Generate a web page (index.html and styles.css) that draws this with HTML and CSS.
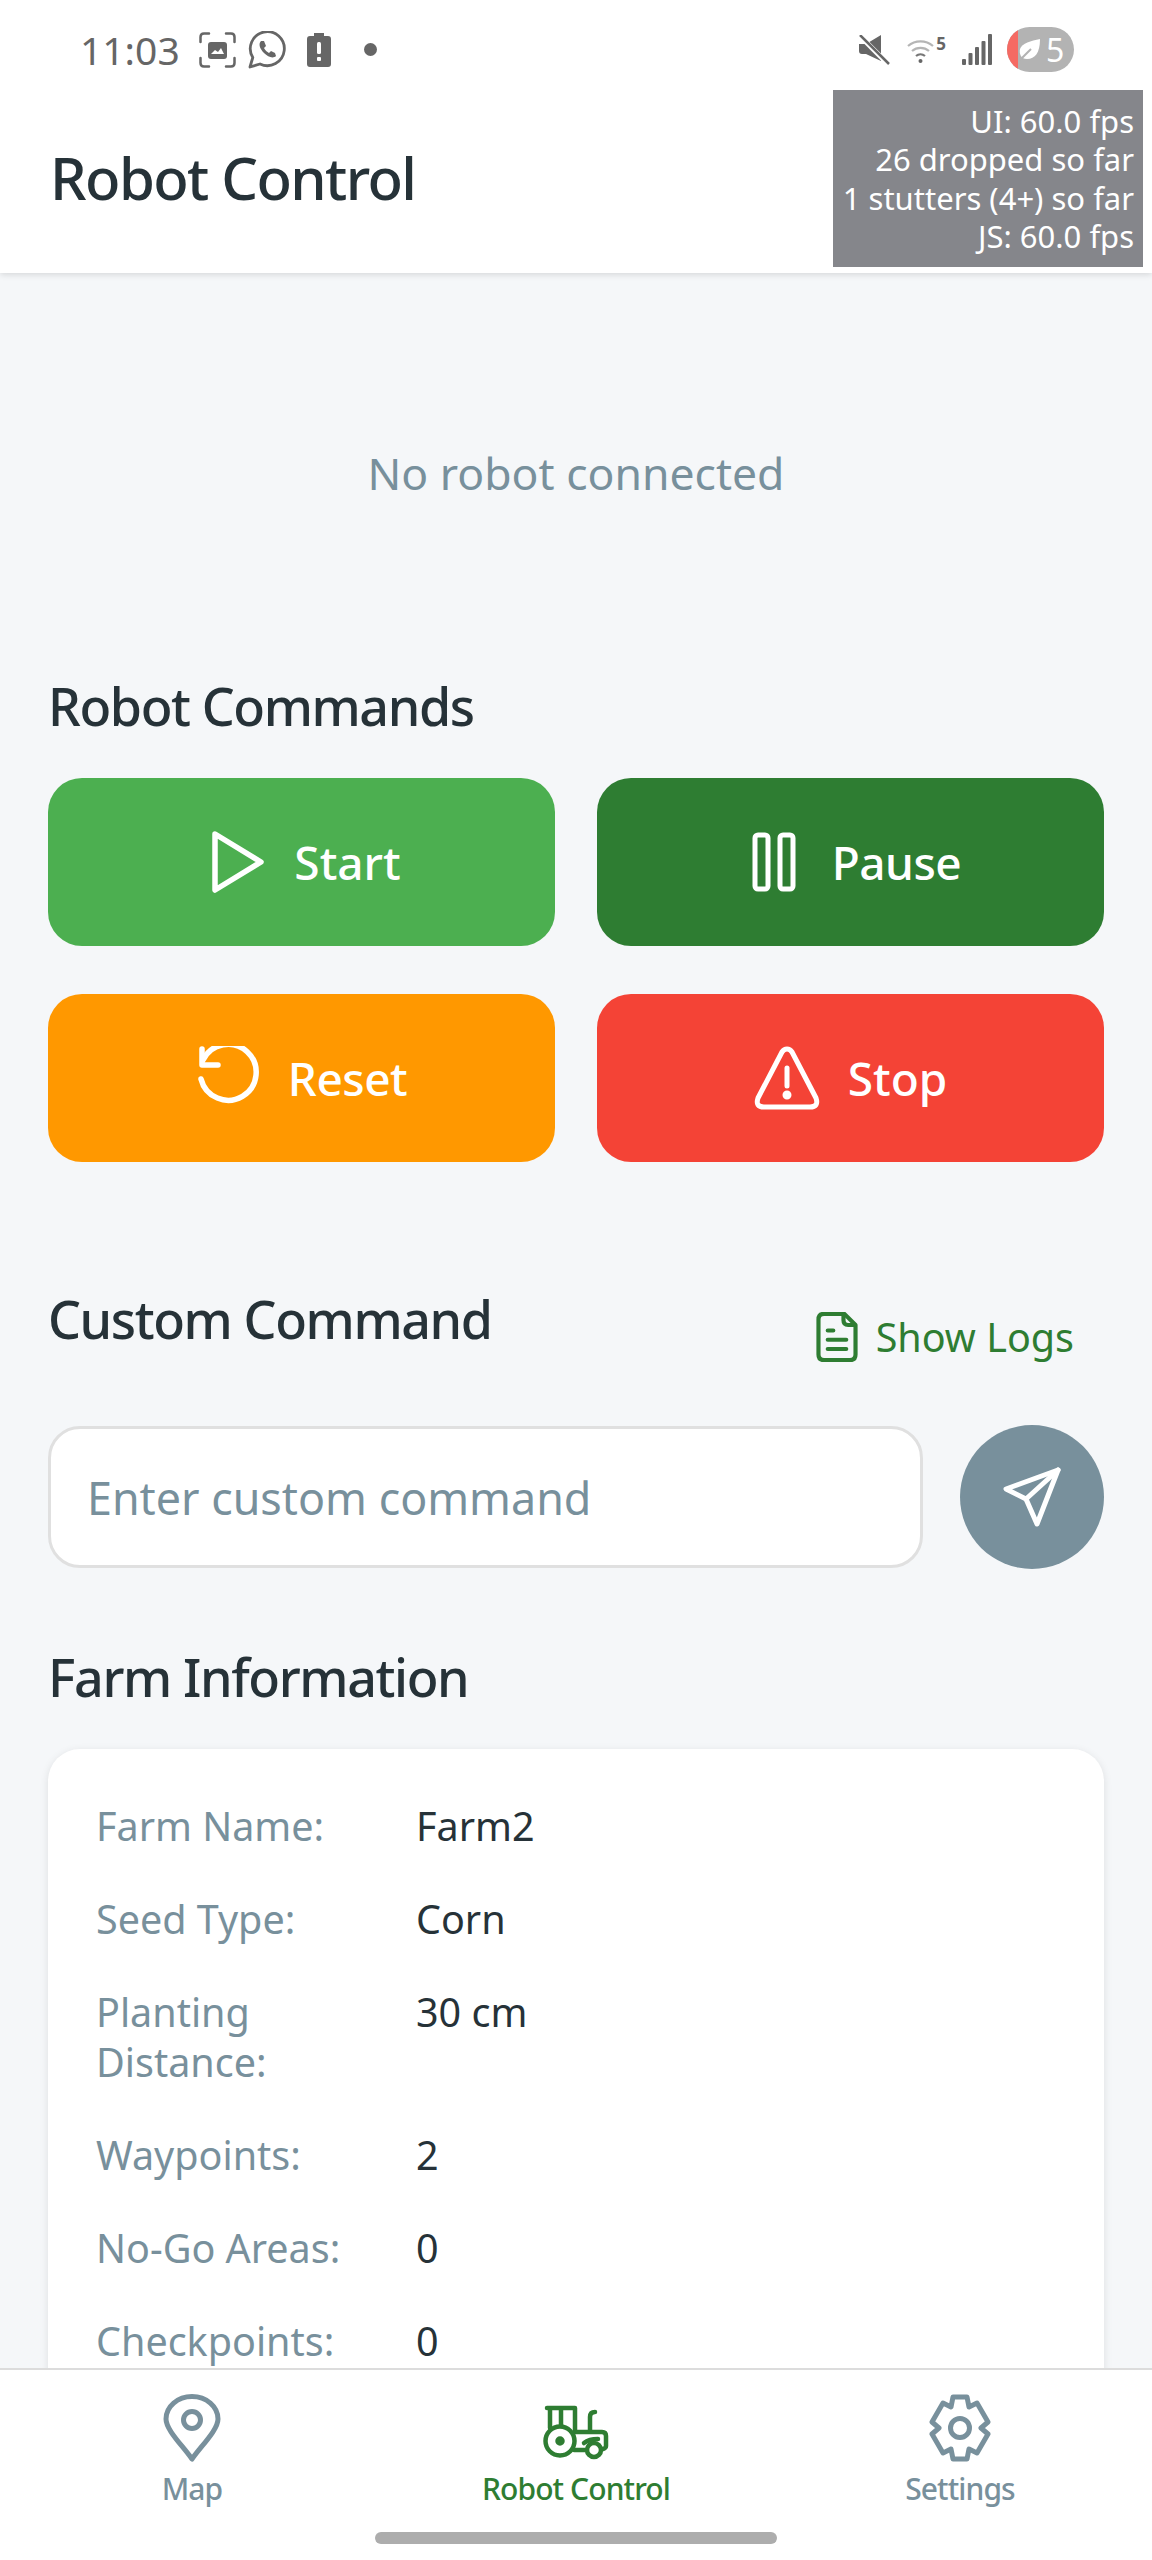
FILE: index.html
```html
<!DOCTYPE html>
<html lang="en">
<head>
    <meta charset="UTF-8">
    <meta name="viewport" content="width=device-width, initial-scale=1.0">
    <title>Robot Control</title>
    <link rel="stylesheet" href="styles.css">
</head>
<body>
<div class="app">

    <!-- status bar -->
    <div class="status-bar">
        <div class="status-left">
            <span class="clock">11:03</span>
            <svg class="st-shot" width="37" height="36" viewBox="0 0 37 36" fill="none" stroke="#666" stroke-width="2.500" stroke-linecap="round">
                <path d="M1.500 10V5q0-3.500 3.500-3.500h5M27 1.500h5q3.500 0 3.500 3.500v5M35.500 26v5q0 3.500-3.500 3.500h-5M10 34.500H5q-3.500 0-3.500-3.500v-5"/>
                <rect x="9" y="10" width="19" height="17" rx="3" fill="#666" stroke="none"/>
                <path d="M12 22l4-4 3 2 3-4 3 6z" fill="#fff" stroke="none"/>
            </svg>
            <svg class="st-chat" width="39" height="38" viewBox="0 0 39 38" fill="none" stroke="#666" stroke-width="2.800">
                <path d="M2 36l2.800-9.500A17 17 0 1 1 12 33z" stroke-linejoin="round"/>
                <path d="M13 10c-3 3-1 8 3 12s9 6 12 3l-1-3-4-2-2 2c-2-1-4-3-5-5l2-2-2-5z" fill="#666" stroke="none"/>
            </svg>
            <svg class="st-batt" width="24" height="34" viewBox="0 0 24 34">
                <path d="M7 0h10v3h4q3 0 3 3v25q0 3-3 3H3q-3 0-3-3V6q0-3 3-3h4z" fill="#666"/>
                <rect x="10" y="9" width="4" height="12" rx="1.500" fill="#fff"/>
                <rect x="10" y="24" width="4" height="4" rx="1" fill="#fff"/>
            </svg>
            <span class="st-dot"></span>
        </div>
        <div class="status-right">
            <svg class="st-mute" width="31" height="30" viewBox="0 0 31 30">
                <path d="M0 9h7L22 0v26L7 19H3q-3 0-3-3z" fill="#666"/>
                <path d="M2 2l28 28" stroke="#fff" stroke-width="5"/>
                <path d="M1 0l29 29" stroke="#666" stroke-width="2.500"/>
            </svg>
            <div class="st-wifi">
                <svg width="27" height="26" viewBox="0 0 27 26" fill="none" stroke="#b5b5b5" stroke-width="2.200">
                    <path d="M1 9a19 19 0 0 1 25 0M5 14a13 13 0 0 1 17 0"/>
                    <path d="M9 19a7 7 0 0 1 9 0" stroke="#777"/>
                    <circle cx="13.500" cy="24" r="2" fill="#666" stroke="none"/>
                </svg>
                <span class="wifi-num">5</span>
            </div>
            <svg class="st-signal" width="30" height="31" viewBox="0 0 30 31" fill="#666">
                <rect x="0" y="25" width="4" height="6" rx="1"/>
                <rect x="6.500" y="19" width="4" height="12" rx="1"/>
                <rect x="13" y="13" width="4" height="18" rx="1"/>
                <rect x="19.500" y="7" width="4" height="24" rx="1"/>
                <rect x="26" y="0" width="4" height="31" rx="1"/>
            </svg>
            <div class="battery">
                <span class="battery-low"></span>
                <svg width="22" height="22" viewBox="0 0 22 22">
                    <path d="M21 0C21 14 16 20 8 20 2 20 0 15 1 10 3 4 12 2 21 0z" fill="#fff"/>
                    <path d="M0 22L12 10" stroke="#b3b3b3" stroke-width="2"/>
                </svg>
                <span class="battery-num">5</span>
            </div>
        </div>
    </div>

    <header class="top-bar">
        <h1>Robot Control</h1>
    </header>

    <!-- fps overlay from the dev build -->
    <div class="perf">
        <div>UI: 60.0 fps</div>
        <div>26 dropped so far</div>
        <div>1 stutters (4+) so far</div>
        <div>JS: 60.0 fps</div>
    </div>

    <main class="content">
        <p class="no-robot">No robot connected</p>

        <h2 class="commands-title">Robot Commands</h2>
        <div class="commands">
            <button class="cmd cmd-start">
                <svg width="64" height="64" viewBox="-9 0 64 64" fill="none" stroke="#fff" stroke-width="5.500" stroke-linejoin="round">
                    <path d="M4 4l46 28L4 60z"/>
                </svg>
                Start
            </button>
            <button class="cmd cmd-pause">
                <svg width="64" height="64" viewBox="-12 -2 64 64" fill="none" stroke="#fff" stroke-width="5">
                    <rect x="3" y="3" width="13" height="54" rx="3"/>
                    <rect x="28" y="3" width="13" height="54" rx="3"/>
                </svg>
                Pause
            </button>
            <button class="cmd cmd-reset">
                <svg width="64" height="64" viewBox="-2 0 64 64" fill="none" stroke="#fff" stroke-width="5.500" stroke-linecap="round" stroke-linejoin="round">
                    <path d="M5 14A28 28 0 1 1 3 33"/>
                    <path d="M4 3v16h16"/>
                </svg>
                Reset
            </button>
            <button class="cmd cmd-stop">
                <svg width="66" height="64" viewBox="0 0 66 64" fill="none" stroke="#fff" stroke-width="5" stroke-linecap="round" stroke-linejoin="round">
                    <path d="M33 3q3 0 5 3l24 46q3 9-6 9H10q-9 0-6-9L28 6q2-3 5-3z"/>
                    <path d="M33 22v18"/>
                    <circle cx="33" cy="49" r="2" fill="#fff"/>
                </svg>
                Stop
            </button>
        </div>

        <div class="custom-head">
            <h2>Custom Command</h2>
            <div class="show-logs">
                <svg width="42" height="50" viewBox="0 0 44 54" fill="none" stroke="#2e7d32" stroke-width="4.500" stroke-linecap="round" stroke-linejoin="round">
                    <path d="M8 2h22l12 12v32q0 6-6 6H8q-6 0-6-6V8q0-6 6-6z"/>
                    <path d="M29 3v6q0 5 5 5h7"/>
                    <path d="M12 20h6M12 30h20M12 40h20"/>
                </svg>
                <span>Show Logs</span>
            </div>
        </div>
        <div class="custom-row">
            <div class="custom-input">Enter custom command</div>
            <button class="send">
                <svg width="58" height="60" viewBox="0 0 58 60" fill="none" stroke="#fff" stroke-width="5" stroke-linecap="round" stroke-linejoin="round">
                    <path d="M55 3L3 22l20 10 11 25z"/>
                    <path d="M23 32L55 3"/>
                </svg>
            </button>
        </div>

        <h2 class="farm-title">Farm Information</h2>
        <div class="farm-card">
            <div class="farm-row"><span class="farm-label">Farm Name:</span><span class="farm-value">Farm2</span></div>
            <div class="farm-row"><span class="farm-label">Seed Type:</span><span class="farm-value">Corn</span></div>
            <div class="farm-row"><span class="farm-label">Planting Distance:</span><span class="farm-value">30 cm</span></div>
            <div class="farm-row"><span class="farm-label">Waypoints:</span><span class="farm-value">2</span></div>
            <div class="farm-row"><span class="farm-label">No-Go Areas:</span><span class="farm-value">0</span></div>
            <div class="farm-row"><span class="farm-label">Checkpoints:</span><span class="farm-value">0</span></div>
        </div>
    </main>

    <nav class="tabs">
        <div class="tab">
            <svg width="58" height="68" viewBox="0 0 58 68" fill="none" stroke="#78909c" stroke-width="5">
                <path d="M29 65C20 52 3 36 3 25a26 22.500 0 0 1 52 0C55 36 38 52 29 65z" stroke-linejoin="round"/>
                <circle cx="29" cy="26" r="8.500"/>
            </svg>
            <span>Map</span>
        </div>
        <div class="tab tab-active">
            <svg width="66" height="68" viewBox="0 -11 66 68" fill="none" stroke="#2e7d32" stroke-width="4.500" stroke-linecap="round" stroke-linejoin="round">
                <path d="M4 3h28M7 3v20M18 3v18M32 3v24M52 7q-5 0-5 5v13"/>
                <path d="M32 27h27q4 0 4 4v10q0 2-3 3"/>
                <circle cx="17" cy="36" r="14.500"/>
                <circle cx="17" cy="36" r="2.500" fill="#2e7d32"/>
                <circle cx="51" cy="45" r="7"/>
                <path d="M31 45h13M41 38q5-4 14-4"/>
            </svg>
            <span>Robot Control</span>
        </div>
        <div class="tab">
            <svg width="62" height="68" viewBox="0 0 62 68" fill="none" stroke="#78909c" stroke-width="5" stroke-linejoin="round">
                <path d="M24 3h14l2 10 8-4 11 19-7 6 7 6-11 19-8-4-2 10H24l-2-10-8 4L3 40l7-6-7-6L14 9l8 4z"/>
                <circle cx="31" cy="34" r="9.500"/>
            </svg>
            <span>Settings</span>
        </div>
    </nav>
    <div class="home-pill"></div>
</div>
</body>
</html>
```

FILE: styles.css
```css
* {
    box-sizing: border-box;
}
body {
    margin: 0;
    padding: 0;
    background: #f5f7f9;
    font-family: "Noto Sans", "Open Sans", sans-serif;
    color: #263238;
}
h1, h2, p {
    margin: 0;
    font-weight: 500;
}
.app {
    position: relative;
    width: 1152px;
    height: 2560px;
    display: flex;
    flex-direction: column;
    overflow: hidden;
}

/* status bar */
.status-bar {
    position: relative;
    z-index: 3;
    height: 88px;
    flex-shrink: 0;
    background: #fff;
    display: flex;
    justify-content: space-between;
    align-items: center;
    padding: 11px 78px 0 80px;
}
.status-left, .status-right {
    display: flex;
    align-items: center;
}
.clock {
    font-size: 39px;
    color: #666;
    margin-right: 19px;
}
.st-chat {
    margin-left: 12px;
}
.st-batt {
    margin-left: 20px;
}
.st-dot {
    width: 13px;
    height: 13px;
    border-radius: 50%;
    background: #666;
    margin-left: 33px;
}
.st-wifi {
    display: flex;
    align-items: flex-start;
    gap: 2px;
    margin-left: 17px;
}
.st-signal {
    margin-left: 16px;
}
.wifi-num {
    font-size: 17px;
    line-height: 14px;
    font-weight: 700;
    color: #666;
}
.battery {
    position: relative;
    width: 67px;
    height: 45px;
    margin-left: 15px;
    border-radius: 23px;
    background: #b3b3b3;
    overflow: hidden;
    display: flex;
    align-items: center;
    padding-left: 12px;
    color: #fff;
}
.battery-low {
    position: absolute;
    left: 0;
    top: 0;
    bottom: 0;
    width: 11px;
    background: #f56a63;
}
.battery svg {
    position: relative;
    margin-right: 5px;
}
.battery-num {
    font-size: 32px;
    line-height: 45px;
}

/* header */
.top-bar {
    height: 185px;
    flex-shrink: 0;
    background: #fff;
    display: flex;
    align-items: center;
    padding: 0 50px;
    box-shadow: 0 2px 6px rgba(0, 0, 0, 0.12);
    z-index: 2;
}
.top-bar h1 {
    font-size: 58px;
    letter-spacing: -1.600px;
    line-height: 80px;
    margin-bottom: 6px;
}
.perf {
    position: absolute;
    top: 90px;
    right: 9px;
    width: 310px;
    height: 177px;
    padding: 12px 9px 0 0;
    background: #85868b;
    color: #fff;
    font-size: 31px;
    line-height: 38.300px;
    text-align: right;
    z-index: 3;
}

/* main area */
.content {
    flex: 1;
    min-height: 0;
    overflow: hidden;
    padding: 0 48px;
}
.no-robot {
    padding-top: 163px;
    font-size: 44.500px;
    line-height: 74px;
    text-align: center;
    font-weight: 400;
    color: #78909c;
}
.commands-title, .custom-head h2, .farm-title {
    font-size: 52px;
    line-height: 68px;
    letter-spacing: -1.400px;
}
.commands-title {
    margin-top: 162px;
}
.commands {
    display: grid;
    grid-template-columns: 1fr 1fr;
    column-gap: 42px;
    row-gap: 48px;
    margin-top: 38px;
}
.cmd {
    height: 168px;
    border: none;
    border-radius: 34px;
    display: flex;
    align-items: center;
    justify-content: center;
    gap: 28px;
    font-family: inherit;
    font-size: 46px;
    font-weight: 500;
    color: #fff;
}
.cmd-start { background: #4caf50; }
.cmd-pause { background: #2e7d32; letter-spacing: -0.500px; }
.cmd-reset { background: #ff9800; letter-spacing: -0.500px; padding-left: 6px; }
.cmd-stop { background: #f44336; }

.custom-head {
    display: flex;
    justify-content: space-between;
    align-items: flex-start;
    margin-top: 123px;
}
.show-logs {
    display: flex;
    align-items: center;
    gap: 18px;
    margin: 25px 30px 0 0;
    font-size: 39.500px;
    line-height: 54px;
    color: #2e7d32;
}
.custom-row {
    display: flex;
    align-items: center;
    gap: 37px;
    margin-top: 61px;
}
.custom-input {
    flex: 1;
    height: 142px;
    background: #fff;
    border: 3px solid #e0e0e0;
    border-radius: 32px;
    padding: 0 36px;
    display: flex;
    align-items: center;
    font-size: 44.800px;
    color: #78909c;
}
.send {
    width: 144px;
    height: 144px;
    flex-shrink: 0;
    border: none;
    border-radius: 50%;
    background: #78909c;
    display: flex;
    align-items: center;
    justify-content: center;
    padding: 0;
}
.farm-title {
    margin-top: 74px;
}
.farm-card {
    margin-top: 38px;
    background: #fff;
    border-radius: 32px;
    padding: 52px 48px 40px;
    box-shadow: 0 2px 8px rgba(0, 0, 0, 0.1);
    display: flex;
    flex-direction: column;
    gap: 43px;
}
.farm-row {
    display: flex;
    font-size: 39.500px;
    line-height: 50px;
}
.farm-label {
    width: 320px;
    padding-right: 40px;
    color: #78909c;
}
.farm-value {
    color: #263238;
}

/* bottom tabs */
.tabs {
    height: 192px;
    flex-shrink: 0;
    background: #fff;
    border-top: 2px solid #dcdcdc;
    display: flex;
    z-index: 2;
    padding-top: 24px;
}
.tab {
    flex: 1;
    display: flex;
    flex-direction: column;
    align-items: center;
    font-size: 30px;
    letter-spacing: -0.900px;
    font-weight: 500;
    line-height: 40px;
    color: #78909c;
    gap: 7px;
}
.tab svg {
    height: 68px;
}
.tab-active {
    color: #2e7d32;
}
.home-pill {
    position: absolute;
    left: 375px;
    bottom: 16px;
    width: 402px;
    height: 12px;
    border-radius: 6px;
    background: #adadad;
    z-index: 3;
}
```
